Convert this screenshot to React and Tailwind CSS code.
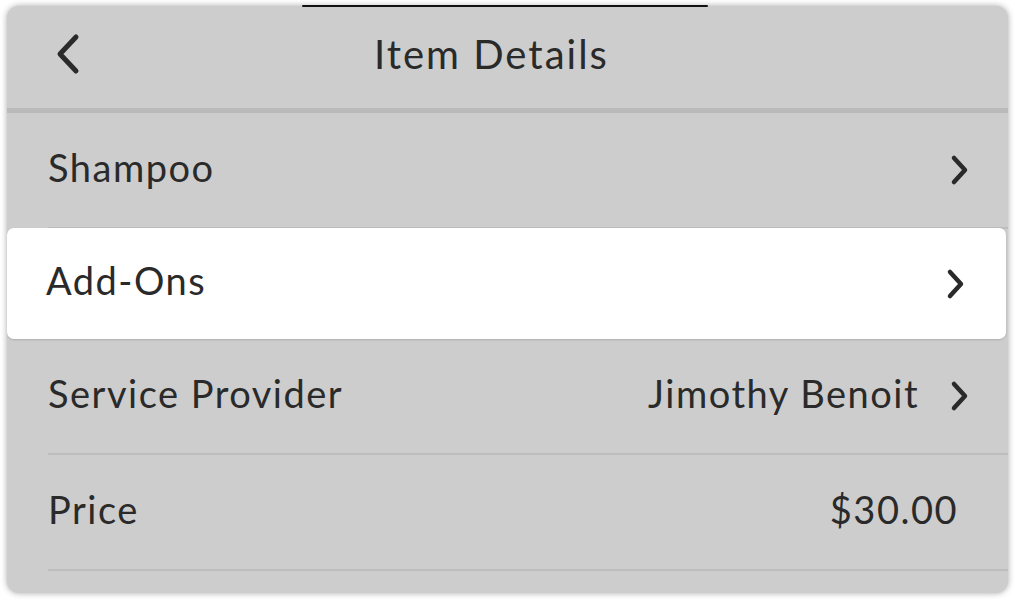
import React from "react";

const Chevron = ({ className = "" }) => (
  <svg width="22" height="34" viewBox="0 0 22 34" className={className} fill="none">
    <polyline points="5,5 16,17 5,29" stroke="#2a2a2a" strokeWidth="4.5" strokeLinecap="round" strokeLinejoin="round" />
  </svg>
);

const Row = ({ label, value, chevron = true }) => (
  <div className="pl-[41px]">
    <div className="h-[116px] flex items-center border-b-2 border-[#bdbdbd] pr-[37px]">
      <span className="flex-1 pb-[6px]">{label}</span>
      {value && <span className={chevron ? "mr-[30px] pb-[6px]" : "mr-[13px] pb-[6px]"}>{value}</span>}
      {chevron && <Chevron />}
    </div>
  </div>
);

export default function App() {
  return (
    <div
      className="w-[1015px] h-[600px] bg-white relative overflow-hidden text-[#2a2a2a]"
      style={{ fontFamily: "Lato, 'Open Sans', sans-serif" }}
    >
      <div className="mx-[7px] mt-[6px] h-[587px] rounded-[12px] bg-[#cdcdcd] shadow-[0_0_6px_rgba(0,0,0,0.35)] overflow-hidden text-[38px] tracking-[1.5px]">
        <div className="h-[102px] flex items-center relative">
          <svg width="30" height="44" viewBox="0 0 30 44" className="ml-[45px] mb-[6px]" fill="none">
            <polyline points="24,5 8,22 24,39" stroke="#2a2a2a" strokeWidth="5" strokeLinecap="round" strokeLinejoin="round" />
          </svg>
          <div className="absolute inset-0 flex items-center justify-center text-[40px] tracking-[2px]">
            <span className="mr-[32px] pb-[6px]">Item Details</span>
          </div>
        </div>
        <div className="h-[5px] bg-[#bababa]" />
        <Row label="Shampoo" />
        <div className="bg-white rounded-[7px] h-[111px] mr-[2px] -mt-[1px] flex items-center pl-[39px] pr-[39px] shadow-[0_1px_2px_rgba(0,0,0,0.15)]">
          <span className="flex-1 pb-[6px]">Add-Ons</span>
          <Chevron />
        </div>
        <Row label="Service Provider" value="Jimothy Benoit" />
        <Row label="Price" value="$30.00" chevron={false} />
      </div>
      <div className="absolute top-[5px] left-[302px] w-[406px] h-[2px] rounded-full bg-[#111]" />
    </div>
  );
}
